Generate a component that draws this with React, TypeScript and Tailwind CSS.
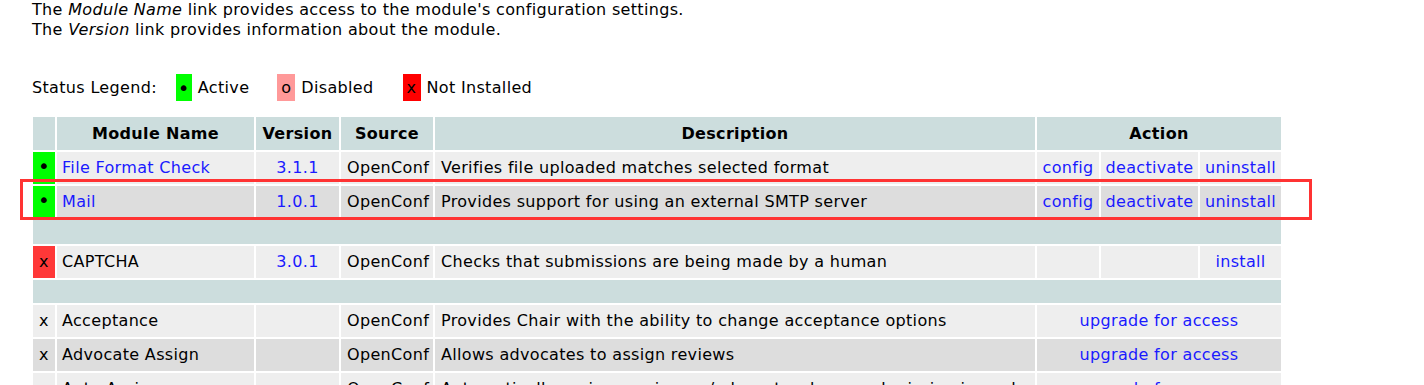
import React from "react";

type Mod = {
  status: "active" | "missing" | "locked";
  name: string;
  version?: string;
  desc: string;
  actions: "on" | "install" | "upgrade";
};

const installed: Mod[] = [
  { status: "active", name: "File Format Check", version: "3.1.1", desc: "Verifies file uploaded matches selected format", actions: "on" },
  { status: "active", name: "Mail", version: "1.0.1", desc: "Provides support for using an external SMTP server", actions: "on" },
];

const available: Mod[] = [
  { status: "missing", name: "CAPTCHA", version: "3.0.1", desc: "Checks that submissions are being made by a human", actions: "install" },
];

const premium: Mod[] = [
  { status: "locked", name: "Acceptance", desc: "Provides Chair with the ability to change acceptance options", actions: "upgrade" },
  { status: "locked", name: "Advocate Assign", desc: "Allows advocates to assign reviews", actions: "upgrade" },
  { status: "locked", name: "Auto Assign", desc: "Automatically assigns reviewers/advocate when a submission is made", actions: "upgrade" },
];

const link = "text-[#1a1aff]";

function Dot() {
  return <span className="text-[20px] leading-none">•</span>;
}

function StatusCell({ status }: { status: Mod["status"] }) {
  if (status === "active")
    return (
      <td className="bg-[#00ff00] text-center">
        <Dot />
      </td>
    );
  if (status === "missing") return <td className="bg-[#ff3838] text-center">x</td>;
  return <td className="text-center">x</td>;
}

function Row({ m, shade }: { m: Mod; shade: string }) {
  return (
    <tr className={`h-[32px] ${shade}`}>
      <StatusCell status={m.status} />
      <td className="px-[5px]">
        {m.status === "active" ? <span className={link}>{m.name}</span> : m.name}
      </td>
      <td className={`text-center ${link}`}>{m.version ?? ""}</td>
      <td className="px-[6px]">OpenConf</td>
      <td className="px-[6px] whitespace-nowrap overflow-hidden">{m.desc}</td>
      {m.actions === "on" && (
        <>
          <td className={`text-center ${link}`}>config</td>
          <td className={`text-center ${link}`}>deactivate</td>
          <td className={`text-center ${link}`}>uninstall</td>
        </>
      )}
      {m.actions === "install" && (
        <>
          <td></td>
          <td></td>
          <td className={`text-center ${link}`}>install</td>
        </>
      )}
      {m.actions === "upgrade" && (
        <td colSpan={3} className={`text-center ${link}`}>upgrade for access</td>
      )}
    </tr>
  );
}

function Spacer({ h }: { h: string }) {
  return (
    <tr className={`${h} bg-[#ccdddd]`}>
      <td colSpan={8}></td>
    </tr>
  );
}

export default function App() {
  const shadeOf = (i: number) => (i % 2 === 0 ? "bg-[#eeeeee]" : "bg-[#dddddd]");

  return (
    <div className="relative bg-white text-black text-[16px] tracking-[0.33px] font-['DejaVu_Sans','Verdana',sans-serif] overflow-hidden h-[385px]">
      <div className="pl-[32px]">
        <p className="leading-[20px]">
          The <i>Module Name</i> link provides access to the module's configuration settings.
          <br />
          The <i>Version</i> link provides information about the module.
        </p>

        {/* status legend */}
        <div className="mt-[34px] flex items-center h-[27px]">
          <span>Status Legend:</span>
          <span className="ml-[19px] w-[16px] h-[27px] bg-[#00ff00] flex items-center justify-center">
            <Dot />
          </span>
          <span className="ml-[6px]">Active</span>
          <span className="ml-[28px] w-[18px] h-[27px] bg-[#ff9999] flex items-center justify-center">o</span>
          <span className="ml-[6px]">Disabled</span>
          <span className="ml-[29px] w-[18px] h-[27px] bg-[#ff0000] flex items-center justify-center">x</span>
          <span className="ml-[6px]">Not Installed</span>
        </div>
      </div>

      <table className="ml-[31px] mt-[14px] table-fixed border-separate border-spacing-[2px] w-[1252px]">
        <colgroup>
          <col className="w-[22px]" />
          <col className="w-[197px]" />
          <col className="w-[83px]" />
          <col className="w-[92px]" />
          <col className="w-[600px]" />
          <col className="w-[62px]" />
          <col className="w-[97px]" />
          <col className="w-[81px]" />
        </colgroup>
        <thead>
          <tr className="h-[33px] bg-[#ccdddd] font-bold">
            <th></th>
            <th>Module Name</th>
            <th>Version</th>
            <th>Source</th>
            <th>Description</th>
            <th colSpan={3}>Action</th>
          </tr>
        </thead>
        <tbody>
          {installed.map((m, i) => (
            <Row key={m.name} m={m} shade={shadeOf(i)} />
          ))}
          <Spacer h="h-[24px]" />
          {available.map((m, i) => (
            <Row key={m.name} m={m} shade={shadeOf(i)} />
          ))}
          <Spacer h="h-[23px]" />
          {premium.map((m, i) => (
            <Row key={m.name} m={m} shade={shadeOf(i)} />
          ))}
        </tbody>
      </table>

      {/* highlight frame around the Mail row */}
      <div className="absolute left-[20px] top-[179px] w-[1292px] h-[41px] border-[3px] border-[#ff3333] pointer-events-none" />
    </div>
  );
}
